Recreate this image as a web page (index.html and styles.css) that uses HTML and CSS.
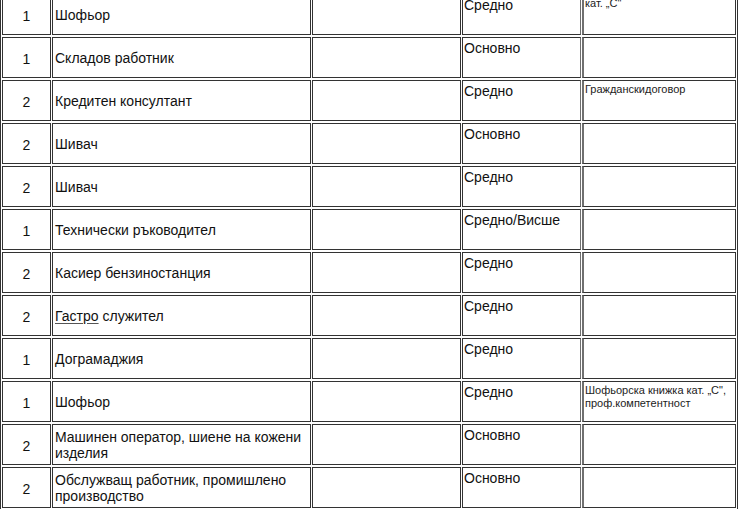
FILE: index.html
```html
<!DOCTYPE html>
<html lang="bg">
<head>
<meta charset="utf-8">
<title>Позиции</title>
<link rel="stylesheet" href="styles.css">
</head>
<body>
<table class="jobs">
  <colgroup>
    <col class="c-num"><col class="c-pos"><col class="c-empty"><col class="c-edu"><col class="c-note">
  </colgroup>
  <tbody>
    <tr><td class="num">1</td><td class="pos">Шофьор</td><td class="blank"></td><td class="edu">Средно</td><td class="note">кат. „С"</td></tr>
    <tr><td class="num">1</td><td class="pos">Складов работник</td><td class="blank"></td><td class="edu">Основно</td><td class="note"></td></tr>
    <tr><td class="num">2</td><td class="pos">Кредитен консултант</td><td class="blank"></td><td class="edu">Средно</td><td class="note"><span class="tight">Граждански договор</span></td></tr>
    <tr><td class="num">2</td><td class="pos">Шивач</td><td class="blank"></td><td class="edu">Основно</td><td class="note"></td></tr>
    <tr><td class="num">2</td><td class="pos">Шивач</td><td class="blank"></td><td class="edu">Средно</td><td class="note"></td></tr>
    <tr><td class="num">1</td><td class="pos">Технически ръководител</td><td class="blank"></td><td class="edu">Средно/Висше</td><td class="note"></td></tr>
    <tr><td class="num">2</td><td class="pos">Касиер бензиностанция</td><td class="blank"></td><td class="edu">Средно</td><td class="note"></td></tr>
    <tr><td class="num">2</td><td class="pos"><span class="marked">Гастро</span> служител</td><td class="blank"></td><td class="edu">Средно</td><td class="note"></td></tr>
    <tr><td class="num">1</td><td class="pos">Дограмаджия</td><td class="blank"></td><td class="edu">Средно</td><td class="note"></td></tr>
    <tr><td class="num">1</td><td class="pos">Шофьор</td><td class="blank"></td><td class="edu">Средно</td><td class="note">Шофьорска книжка кат. „С",<br>проф.компетентност</td></tr>
    <tr><td class="num">2</td><td class="pos">Машинен оператор, шиене на кожени изделия</td><td class="blank"></td><td class="edu">Основно</td><td class="note"></td></tr>
    <tr><td class="num">2</td><td class="pos">Обслужващ работник, промишлено производство</td><td class="blank"></td><td class="edu">Основно</td><td class="note"></td></tr>
  </tbody>
</table>
</body>
</html>
```

FILE: styles.css
```css
html, body {
  margin: 0;
  padding: 0;
  background: #ffffff;
}

body {
  font-family: "Liberation Sans", Arial, sans-serif;
  color: #111111;
}

.jobs {
  margin-top: -9px;
  width: 738px;
  table-layout: fixed;
  border-collapse: separate;
  border-spacing: 1px 2px;
  border: 1px solid #333333;
  background: #ffffff;
}

.c-num { width: 49px; }
.c-pos { width: 259px; }
.c-empty { width: 149px; }
.c-edu { width: 119px; }
.c-note { width: 154px; }

.jobs tr {
  height: 41px;
}

.jobs td {
  box-sizing: border-box;
  border: 1px solid #333333;
  padding: 0;
  font-size: 14px;
  line-height: 16px;
}

.num {
  text-align: center;
  vertical-align: middle;
  padding-top: 2px !important;
}

.pos {
  vertical-align: middle;
  padding: 1px 2px 0 2px !important;
}

.edu {
  vertical-align: top;
  padding: 2px 1px 0 1px !important;
  border-right-color: #707070 !important;
}

.note {
  vertical-align: top;
  font-size: 11px !important;
  line-height: 13px !important;
  padding: 2px 1px 0 1px !important;
  border-left: 2px solid #707070 !important;
  color: #222222;
}

.tight {
  word-spacing: -3px;
}

.marked {
  text-decoration: underline;
  text-decoration-color: #555555;
  text-underline-offset: 2px;
}
```
